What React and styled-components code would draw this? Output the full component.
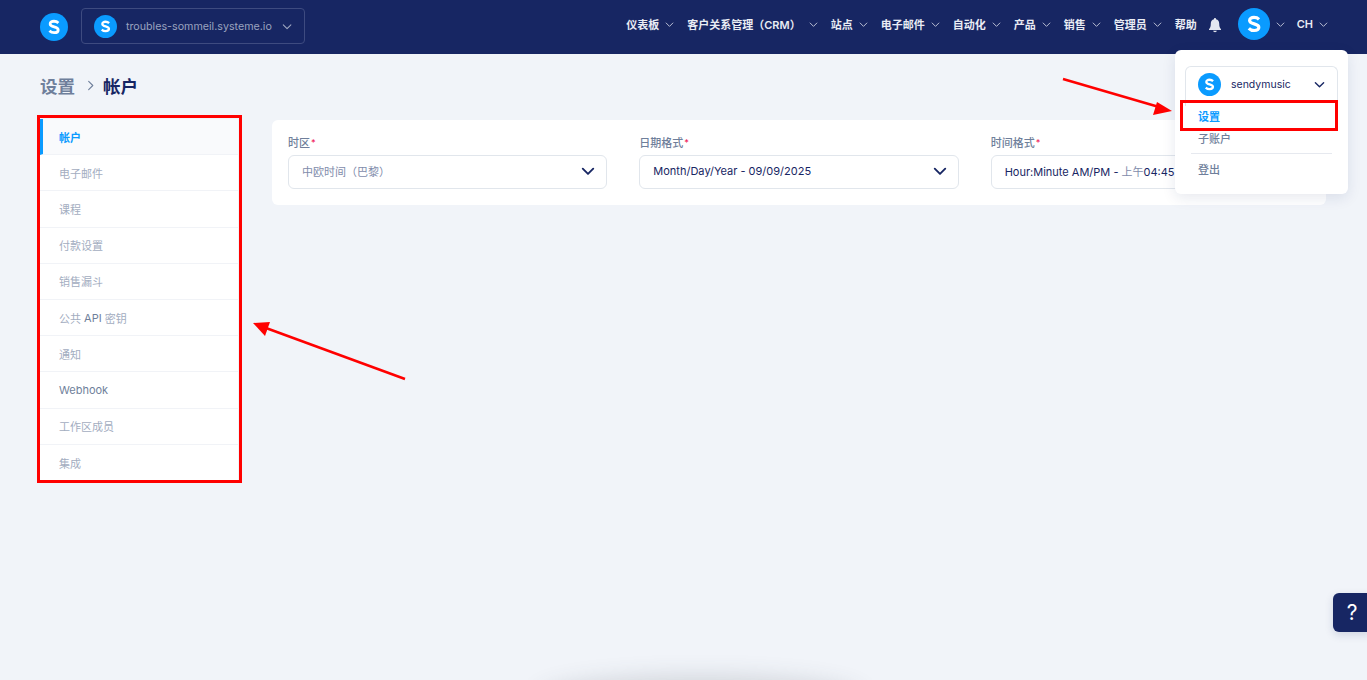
import React from "react";
import styled, { createGlobalStyle } from "styled-components";

const NAV = [
  { label: "仪表板", caret: true },
  { label: "客户关系管理（CRM）", caret: true, gap: 8 },
  { label: "站点", caret: true },
  { label: "电子邮件", caret: true },
  { label: "自动化", caret: true },
  { label: "产品", caret: true },
  { label: "销售", caret: true },
  { label: "管理员", caret: true },
  { label: "帮助" },
];

const MENU = [
  { label: "帐户", active: true },
  { label: "电子邮件" },
  { label: "课程" },
  { label: "付款设置" },
  { label: "销售漏斗" },
  { label: "公共 API 密钥" },
  { label: "通知" },
  { label: "Webhook", latin: true },
  { label: "工作区成员" },
  { label: "集成" },
];

const Chevron = ({ size = 10, color = "currentColor", width = 1.2 }) => (
  <svg width={size} height={size} viewBox="0 0 12 12" fill="none">
    <path d="M1.5 4l4.5 4.5L10.5 4" stroke={color} strokeWidth={width} strokeLinecap="round" strokeLinejoin="round" />
  </svg>
);

const Logo = ({ size }) => (
  <LogoCircle $size={size}>
    <svg width={size} height={size} viewBox="0 0 32 32">
      <path
        d="M21 11.300c-1.200-1.200-3-1.900-5-1.900-2.700 0-4.400 1.200-4.400 3.100 0 4.300 9.200 2.500 9.200 6.800 0 2-1.800 3.200-4.600 3.200-2.100 0-4-.8-5.400-2.200"
        fill="none"
        stroke="#fff"
        strokeWidth="3.200"
      />
    </svg>
  </LogoCircle>
);

export default function App() {
  return (
    <Page>
      <GlobalStyle />
      <Header>
        <Logo size={28} />
        <SiteSwitch>
          <Logo size={23} />
          <SiteName>troubles-sommeil.systeme.io</SiteName>
          <Chevron size={11} color="#a3abc4" />
        </SiteSwitch>
        <Nav>
          {NAV.map((item) => (
            <NavItem key={item.label} $tight={!item.caret}>
              {item.label}
              {item.caret && (
                <CaretWrap $gap={item.gap}>
                  <Chevron size={9} color="#c8cee0" />
                </CaretWrap>
              )}
            </NavItem>
          ))}
          <BellWrap>
            <svg width="16" height="16" viewBox="0 0 16 16" fill="#e4e7f0">
              <path d="M8 1c-.6 0-1 .4-1 1v.3C4.900 2.800 3.800 4.500 3.800 6.600c0 3.500-.8 4.600-1.800 5.600v.8h12v-.8c-1-1-1.800-2.100-1.800-5.600 0-2.100-1.100-3.800-3.200-4.300V2c0-.6-.4-1-1-1z" />
              <path d="M6.200 13.800h3.600c0 .9-.8 1.400-1.800 1.400s-1.800-.5-1.800-1.400z" />
            </svg>
          </BellWrap>
          <Logo size={32} />
          <CaretWrap $gap={6}>
            <Chevron size={9} color="#c8cee0" />
          </CaretWrap>
          <LangItem>
            CH
            <CaretWrap>
              <Chevron size={9} color="#c8cee0" />
            </CaretWrap>
          </LangItem>
        </Nav>
      </Header>

      <Main>
        <Breadcrumb>
          <Crumb>设置</Crumb>
          <CrumbSep>
            <Chevron size={11} color="#6f7f9b" />
          </CrumbSep>
          <CrumbCurrent>帐户</CrumbCurrent>
        </Breadcrumb>
        <Content>
          <SideMenu>
            {MENU.map((item) => (
              <SideItem key={item.label} $active={item.active} $latin={item.latin}>
                {item.label === "公共 API 密钥" ? (
                  <>
                    公共 <Api>API</Api> 密钥
                  </>
                ) : (
                  item.label
                )}
              </SideItem>
            ))}
          </SideMenu>
          <FormCard>
            <Field>
              <FieldLabel>
                时区<Star>*</Star>
              </FieldLabel>
              <Select $muted>
                <SelectText>中欧时间（巴黎）</SelectText>
                <Chevron size={14} color="#172663" width={1.6} />
              </Select>
            </Field>
            <Field>
              <FieldLabel>
                日期格式<Star>*</Star>
              </FieldLabel>
              <Select>
                <SelectText>Month/Day/Year - 09/09/2025</SelectText>
                <Chevron size={14} color="#172663" width={1.6} />
              </Select>
            </Field>
            <Field>
              <FieldLabel>
                时间格式<Star>*</Star>
              </FieldLabel>
              <Select>
                <SelectText>
                  Hour:Minute AM/PM - <Thin>上午</Thin>04:45
                </SelectText>
              </Select>
            </Field>
          </FormCard>
        </Content>
      </Main>

      <Dropdown>
        <Account>
          <Logo size={23} />
          <AccountName>sendymusic</AccountName>
          <Chevron size={11} color="#172663" width={1.5} />
        </Account>
        <DropItem $active>设置</DropItem>
        <DropItem>子账户</DropItem>
        <DropRule />
        <DropItem>登出</DropItem>
      </Dropdown>

      <Annotations width="1367" height="680" viewBox="0 0 1367 680">
        <rect x="38.500" y="116.500" width="202" height="365" fill="none" stroke="#f00" strokeWidth="3" />
        <rect x="1181.500" y="101.500" width="155" height="28" fill="none" stroke="#f00" strokeWidth="3" />
        <path d="M1063 79l96 28" stroke="#f00" strokeWidth="2.500" />
        <path d="M1172 111l-15-9-4 13z" fill="#f00" />
        <path d="M405 379L266 328" stroke="#f00" strokeWidth="2.500" />
        <path d="M253 323l17-1-5 14z" fill="#f00" />
      </Annotations>

      <HelpButton>?</HelpButton>
      <BottomGlow />
    </Page>
  );
}

const GlobalStyle = createGlobalStyle`
  html, body {
    margin: 0;
    padding: 0;
    background: #f1f4f9;
  }
  * {
    box-sizing: border-box;
  }
`;

const FONT = `Inter, "Noto Sans CJK SC", sans-serif`;

const Page = styled.div`
  position: relative;
  width: 1367px;
  height: 680px;
  overflow: hidden;
  background: #f1f4f9;
  font-family: ${FONT};
`;

const Header = styled.header`
  display: flex;
  align-items: center;
  height: 54px;
  padding: 0 39px 0 40px;
  background: #172663;
`;

const LogoCircle = styled.span`
  display: inline-flex;
  flex: none;
  width: ${(p) => p.$size}px;
  height: ${(p) => p.$size}px;
  border-radius: 50%;
  background: #0a9bff;
`;

const SiteSwitch = styled.div`
  display: flex;
  align-items: center;
  width: 224px;
  height: 36px;
  margin: 0 0 2px 13px;
  padding: 0 12px;
  border: 1px solid #3e4b80;
  border-radius: 4px;
  color: #9aa3bf;
`;

const SiteName = styled.span`
  margin: 0 10px 0 9px;
  font-size: 10.700px;
  white-space: nowrap;
`;

const Nav = styled.nav`
  display: flex;
  align-items: center;
  margin-left: auto;
  padding-bottom: 6px;
`;

const NavItem = styled.div`
  display: flex;
  align-items: center;
  margin-right: ${(p) => (p.$tight ? 10 : 13)}px;
  color: #e9ecf4;
  font-size: 11px;
  font-weight: 600;
  white-space: nowrap;
`;

const CaretWrap = styled.span`
  display: inline-flex;
  margin-left: ${(p) => p.$gap || 6}px;
`;

const BellWrap = styled.span`
  display: inline-flex;
  margin: 2px 15px 0 0;
`;

const LangItem = styled.div`
  display: flex;
  align-items: center;
  margin-left: 12px;
  color: #e9ecf4;
  font-size: 11px;
  font-weight: 600;
`;

const Main = styled.main`
  padding: 0 41px 0 40px;
`;

const Breadcrumb = styled.div`
  display: flex;
  align-items: center;
  height: 65px;
  padding-bottom: 2px;
  font-size: 17.500px;
  font-weight: 600;
`;

const Crumb = styled.span`
  color: #6f7f9b;
`;

const CrumbSep = styled.span`
  display: inline-flex;
  margin: 0 7px 0 10px;
  transform: rotate(-90deg);
`;

const CrumbCurrent = styled.span`
  color: #172663;
`;

const Content = styled.div`
  display: flex;
  align-items: flex-start;
`;

const SideMenu = styled.div`
  flex: none;
  width: 198px;
  margin-right: 34px;
  background: #fff;
`;

const SideItem = styled.div`
  display: flex;
  align-items: center;
  height: 36.200px;
  padding-left: ${(p) => (p.$active ? 16 : 19)}px;
  border-left: ${(p) => (p.$active ? "3px solid #0a9bff" : "none")};
  border-bottom: 1px solid #f1f3f7;
  background: ${(p) => (p.$active ? "#f9fafc" : "#fff")};
  color: ${(p) => (p.$active ? "#0a9bff" : p.$latin ? "#6f7f9b" : "#a3adbf")};
  font-size: 11px;
  font-weight: ${(p) => (p.$active ? 600 : 400)};
  white-space: pre;

  &:last-child {
    border-bottom: none;
  }
`;

const Api = styled.span`
  color: #6f7f9b;
  font-weight: 400;
`;

const FormCard = styled.section`
  flex: 1;
  display: grid;
  grid-template-columns: repeat(3, 1fr);
  column-gap: 32px;
  margin-top: 1px;
  padding: 15px 16px 16px;
  border-radius: 6px;
  background: #fff;
`;

const Field = styled.div`
  min-width: 0;
`;

const FieldLabel = styled.div`
  height: 20px;
  color: #6f7f9b;
  font-size: 11px;
  font-weight: 500;
  line-height: 16px;
`;

const Star = styled.span`
  margin-left: 1px;
  color: #f0245c;
  font-size: 9px;
  vertical-align: 1px;
`;

const Select = styled.div`
  display: flex;
  align-items: center;
  justify-content: space-between;
  height: 34px;
  padding: 0 11px 2px 13px;
  border: 1px solid #e1e6ec;
  border-radius: 6px;
  color: ${(p) => (p.$muted ? "#7f8cab" : "#172663")};
  font-size: 11px;
`;

const SelectText = styled.span`
  white-space: nowrap;
`;

const Thin = styled.span`
  color: #7f8cab;
`;

const Dropdown = styled.div`
  position: absolute;
  top: 50px;
  left: 1175px;
  width: 173px;
  height: 144px;
  padding: 16px 10px 0;
  border-radius: 6px;
  background: #fff;
  box-shadow: 0 4px 14px rgba(23, 38, 99, 0.1);
`;

const Account = styled.div`
  display: flex;
  align-items: center;
  height: 40px;
  padding: 0 12px 4px;
  border: 1px solid #e1e6ec;
  border-bottom: none;
  border-radius: 6px 6px 0 0;
`;

const AccountName = styled.span`
  flex: 1;
  margin-left: 10px;
  color: #172663;
  font-size: 10.500px;
  font-weight: 400;
`;

const DropItem = styled.div`
  height: 22px;
  padding-left: 13px;
  color: ${(p) => (p.$active ? "#0a9bff" : "#6f7f9b")};
  font-size: 11px;
  font-weight: ${(p) => (p.$active ? 600 : 500)};
  line-height: 22px;
`;

const DropRule = styled.div`
  height: 1px;
  margin: 3px 6px 5px;
  background: #e6e9ef;
`;

const Annotations = styled.svg`
  position: absolute;
  top: 0;
  left: 0;
  pointer-events: none;
`;

const HelpButton = styled.div`
  position: absolute;
  top: 593px;
  left: 1333px;
  width: 40px;
  height: 39px;
  padding-right: 2px;
  border-radius: 6px;
  background: #172663;
  box-shadow: 0 3px 8px rgba(23, 38, 99, 0.15);
  color: #fff;
  font-size: 21px;
  font-weight: 400;
  line-height: 39px;
  text-align: center;
`;

const BottomGlow = styled.div`
  position: absolute;
  top: 690px;
  left: 550px;
  width: 300px;
  height: 20px;
  border-radius: 50%;
  box-shadow: 0 0 24px 12px rgba(60, 70, 80, 0.2);
`;
